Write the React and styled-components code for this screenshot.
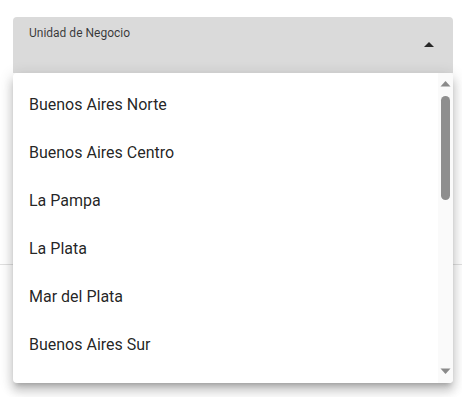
import React from 'react';
import styled, { createGlobalStyle } from 'styled-components';

const GlobalStyle = createGlobalStyle`
  html, body {
    margin: 0;
    padding: 0;
    background: #ffffff;
    font-family: Roboto, "Noto Sans", "Liberation Sans", sans-serif;
  }
`;

const Page = styled.div`
  width: 462px;
  height: 397px;
  overflow: hidden;
  position: relative;
`;

const Form = styled.div`
  padding: 17px 9px 0 13px;
  height: 247px;
  border-bottom: 1px solid #e0e0e0;
`;

const Field = styled.div`
  position: relative;
  width: 440px;
`;

const SelectBox = styled.div`
  height: 56px;
  box-sizing: border-box;
  background: #dadada;
  border-radius: 4px 4px 0 0;
  padding: 0 12px 0 16px;
  display: flex;
  align-items: center;
  justify-content: space-between;
  position: relative;
`;

const Label = styled.span`
  position: absolute;
  top: 9px;
  left: 16px;
  font-size: 12px;
  line-height: 14px;
  color: rgba(0, 0, 0, 0.75);
`;

const Arrow = styled.svg`
  width: 24px;
  height: 24px;
  margin-left: auto;
  transform: rotate(180deg);
  fill: rgba(0, 0, 0, 0.82);
`;

const Menu = styled.div`
  position: absolute;
  top: 56px;
  left: 0;
  width: 440px;
  height: 310px;
  display: flex;
  overflow: hidden;
  background: #ffffff;
  border-radius: 4px;
  box-shadow: 0px 5px 5px -3px rgba(0, 0, 0, 0.2),
    0px 8px 10px 1px rgba(0, 0, 0, 0.14),
    0px 3px 14px 2px rgba(0, 0, 0, 0.12);
`;

const List = styled.ul`
  flex: 1;
  list-style: none;
  margin: 0;
  padding: 7px 0 0;
  overflow: hidden;
`;

const Item = styled.li`
  height: 48px;
  display: flex;
  align-items: center;
  padding: 0 16px;
  font-size: 16px;
  color: rgba(0, 0, 0, 0.87);
  cursor: pointer;
  white-space: nowrap;

  &:hover {
    background: rgba(0, 0, 0, 0.04);
  }
`;

const ScrollBar = styled.div`
  width: 15px;
  display: flex;
  flex-direction: column;
  align-items: center;
  background: #fafafa;
`;

const ScrollButton = styled.svg`
  width: 15px;
  height: 16px;
  flex-shrink: 0;
  fill: #8a8a8a;
  margin-top: ${(p) => (p.$down ? 'auto' : '0')};
`;

const Thumb = styled.div`
  width: 9px;
  height: 104px;
  margin-top: 7px;
  border-radius: 4.5px;
  background: #8e8e8e;
`;

const units = [
  'Buenos Aires Norte',
  'Buenos Aires Centro',
  'La Pampa',
  'La Plata',
  'Mar del Plata',
  'Buenos Aires Sur',
];

const App = () => (
  <Page>
    <GlobalStyle />
    <Form>
      <Field>
        <SelectBox>
          <Label>Unidad de Negocio</Label>
          <Arrow viewBox="0 0 24 24">
            <path d="M7 10l5 5 5-5z" />
          </Arrow>
        </SelectBox>
        <Menu>
          <List>
            {units.map((name) => (
              <Item key={name}>{name}</Item>
            ))}
          </List>
          <ScrollBar>
            <ScrollButton viewBox="0 0 15 16">
              <polygon points="2.5,13.5 12.5,13.5 7.5,8" />
            </ScrollButton>
            <Thumb />
            <ScrollButton $down viewBox="0 0 15 16">
              <polygon points="2.5,1.5 12.5,1.5 7.5,7" />
            </ScrollButton>
          </ScrollBar>
        </Menu>
      </Field>
    </Form>
  </Page>
);

export default App;
